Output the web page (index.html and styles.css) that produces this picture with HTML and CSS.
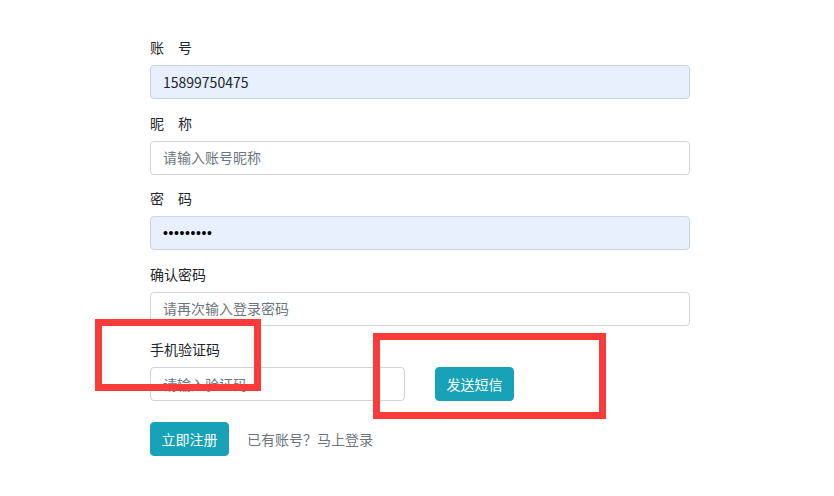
FILE: index.html
```html
<!DOCTYPE html>
<html lang="zh-CN">
<head>
<meta charset="utf-8">
<title>注册</title>
<link rel="stylesheet" href="styles.css">
</head>
<body>
<form class="reg-form">
  <div class="group">
    <label class="label">账　号</label>
    <input class="field autofill" type="text" value="15899750475">
  </div>
  <div class="group">
    <label class="label">昵　称</label>
    <input class="field" type="text" placeholder="请输入账号昵称">
  </div>
  <div class="group">
    <label class="label">密　码</label>
    <input class="field autofill pwd" type="password" value="123456789">
  </div>
  <div class="group">
    <label class="label">确认密码</label>
    <input class="field" type="password" placeholder="请再次输入登录密码">
  </div>
  <div class="group group-last">
    <label class="label">手机验证码</label>
    <div class="code-row">
      <input class="field code" type="text" placeholder="请输入验证码">
      <button type="button" class="btn">发送短信</button>
    </div>
  </div>
  <div class="actions">
    <button type="button" class="btn">立即注册</button>
    <span class="login-link">已有账号？马上登录</span>
  </div>
</form>
<div class="mark mark-one"></div>
<div class="mark mark-two"></div>
</body>
</html>
```

FILE: styles.css
```css
html, body {
  margin: 0;
  padding: 0;
  background: #ffffff;
}

body {
  font-family: "Noto Sans CJK SC", "Noto Sans", sans-serif;
  font-size: 14px;
  color: #212529;
  width: 834px;
  height: 496px;
  overflow: hidden;
  position: relative;
}

.reg-form {
  width: 540px;
  padding-top: 38px;
  padding-left: 150px;
}

.group {
  display: flex;
  flex-direction: column;
  margin-bottom: 14.5px;
}

.group-last {
  margin-bottom: 21px;
}

.label {
  display: block;
  height: 19px;
  line-height: 19px;
  margin-bottom: 8px;
  font-size: 14px;
  color: #212529;
}

.field {
  box-sizing: border-box;
  width: 540px;
  height: 34px;
  padding: 0 12px 1px;
  margin: 0;
  border: 1px solid #ced4da;
  border-radius: 4px;
  background: #ffffff;
  font-family: "Noto Sans CJK SC", "Noto Sans", sans-serif;
  font-size: 14px;
  color: #212529;
  outline: none;
}

.field::placeholder {
  color: #6c757d;
}

.autofill {
  background: #e8f0fe;
  border-color: #cdd3dc;
}

.pwd {
  font-family: "Liberation Sans", sans-serif;
  letter-spacing: 0.6px;
  color: #000000;
}

.code-row {
  display: flex;
  align-items: center;
  gap: 30px;
}

.code {
  width: 255px;
}

.btn {
  box-sizing: border-box;
  width: 79px;
  height: 34px;
  padding: 0;
  border: 1px solid #17a2b8;
  border-radius: 4px;
  background: #17a2b8;
  color: #ffffff;
  font-family: "Noto Sans CJK SC", "Noto Sans", sans-serif;
  font-size: 14px;
  line-height: 32px;
  text-align: center;
  cursor: pointer;
}

.actions {
  display: flex;
  align-items: center;
  gap: 18px;
}

.login-link {
  color: #6c757d;
  font-size: 14px;
}

.mark {
  position: absolute;
  box-sizing: border-box;
  border: 7.5px solid #fb3a3a;
}

.mark-one {
  left: 95px;
  top: 319px;
  width: 166px;
  height: 72px;
}

.mark-two {
  left: 373px;
  top: 333px;
  width: 233px;
  height: 86px;
}
```
